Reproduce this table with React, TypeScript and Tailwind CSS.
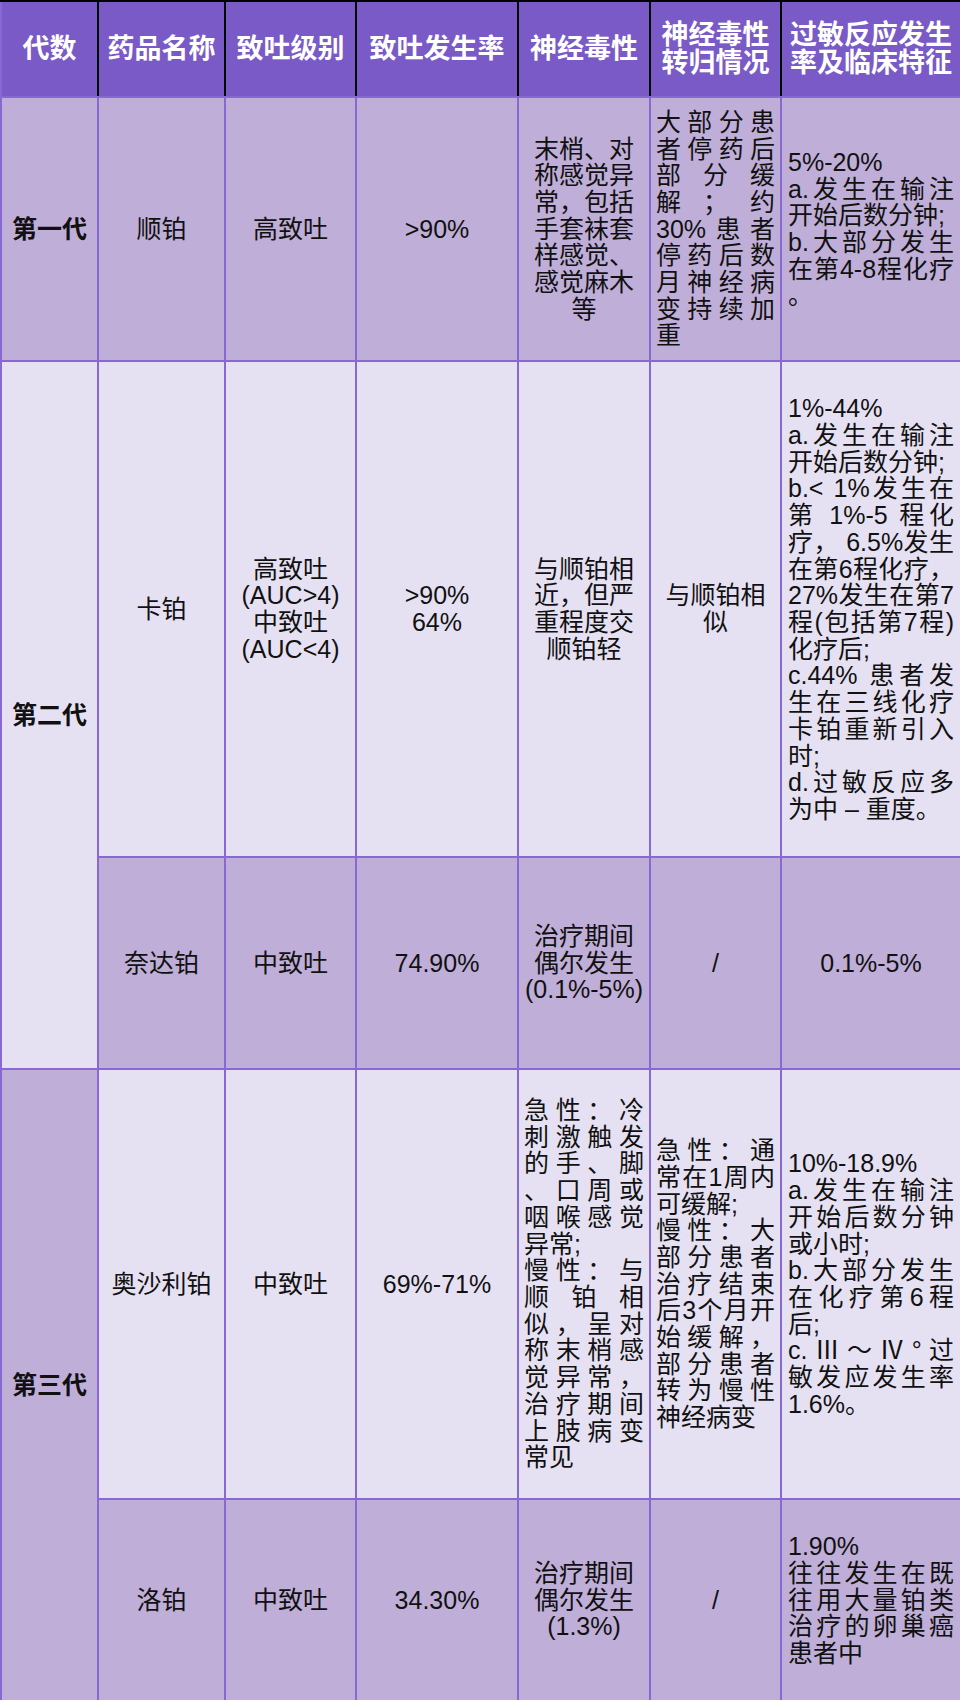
import React from "react";

// 铂类药物对比表
const th =
  "border-2 border-[#8869d4] border-t-black border-r-black bg-[#7a5ac6] text-white font-bold text-[27px] leading-[28px] text-center align-middle px-1";
const td = "border-2 border-[#8869d4] align-middle text-center px-[5px]";
const lilac = "bg-[#bfaed7]";
const light = "bg-[#e6e1f2]";

// 居中的多行文字
function Center({ lines, bold }: { lines: string[]; bold?: boolean }) {
  return (
    <div className={bold ? "font-bold" : ""}>
      {lines.map((l, i) => (
        <div key={i}>{l}</div>
      ))}
    </div>
  );
}

// 两端对齐：每段最后一行左对齐
function Justify({ paras }: { paras: string[][] }) {
  return (
    <div className="text-left">
      {paras.map((p, i) =>
        p.map((line, j) => (
          <div
            key={`${i}-${j}`}
            className={
              j < p.length - 1
                ? "text-justify [text-align-last:justify]"
                : "text-left"
            }
          >
            {line}
          </div>
        ))
      )}
    </div>
  );
}

export default function App() {
  return (
    <div className="w-[960px] bg-white">
      <table className="w-[960px] table-fixed border-collapse text-[25px] leading-[26.7px] text-[#111] font-['Liberation_Sans','Noto_Sans_CJK_SC',sans-serif]">
        <colgroup>
          <col className="w-[97px]" />
          <col className="w-[127px]" />
          <col className="w-[131px]" />
          <col className="w-[162px]" />
          <col className="w-[132px]" />
          <col className="w-[131px]" />
          <col className="w-[180px]" />
        </colgroup>
        <thead>
          <tr className="h-[96px]">
            <th className={th}>代数</th>
            <th className={th}>药品名称</th>
            <th className={th}>致吐级别</th>
            <th className={th}>致吐发生率</th>
            <th className={th}>神经毒性</th>
            <th className={th}>
              神经毒性
              <br />
              转归情况
            </th>
            <th className={th}>
              过敏反应发生
              <br />
              率及临床特征
            </th>
          </tr>
        </thead>
        <tbody>
          {/* 第一代 */}
          <tr className={`h-[264px] ${lilac}`}>
            <td className={td}>
              <Center lines={["第一代"]} bold />
            </td>
            <td className={td}>顺铂</td>
            <td className={td}>高致吐</td>
            <td className={td}>&gt;90%</td>
            <td className={td}>
              <Center
                lines={["末梢、对", "称感觉异", "常，包括", "手套袜套", "样感觉、", "感觉麻木", "等"]}
              />
            </td>
            <td className={td}>
              <Justify
                paras={[
                  ["大部分患", "者停药后", "部分缓", "解；约", "30%患者", "停药后数", "月神经病", "变持续加", "重"],
                ]}
              />
            </td>
            <td className={`${td} px-[6px]`}>
              <Justify
                paras={[
                  ["5%-20%"],
                  ["a.发生在输注", "开始后数分钟;"],
                  ["b.大部分发生", "在第4-8程化疗", "。"],
                ]}
              />
            </td>
          </tr>

          {/* 第二代 */}
          <tr className={`h-[496px] ${light}`}>
            <td className={td} rowSpan={2}>
              <Center lines={["第二代"]} bold />
            </td>
            <td className={td}>卡铂</td>
            <td className={td}>
              <Center lines={["高致吐", "(AUC>4)", "中致吐", "(AUC<4)"]} />
            </td>
            <td className={td}>
              <Center lines={[">90%", "64%"]} />
            </td>
            <td className={td}>
              <Center lines={["与顺铂相", "近，但严", "重程度交", "顺铂轻"]} />
            </td>
            <td className={td}>
              <Center lines={["与顺铂相", "似"]} />
            </td>
            <td className={`${td} px-[6px]`}>
              <Justify
                paras={[
                  ["1%-44%"],
                  ["a.发生在输注", "开始后数分钟;"],
                  ["b.< 1%发生在", "第 1%-5 程化", "疗， 6.5%发生", "在第6程化疗，", "27%发生在第7", "程(包括第7程)", "化疗后;"],
                  ["c.44% 患者发", "生在三线化疗", "卡铂重新引入", "时;"],
                  ["d.过敏反应多", "为中 – 重度。"],
                ]}
              />
            </td>
          </tr>
          <tr className={`h-[212px] ${lilac}`}>
            <td className={td}>奈达铂</td>
            <td className={td}>中致吐</td>
            <td className={td}>74.90%</td>
            <td className={td}>
              <Center lines={["治疗期间", "偶尔发生", "(0.1%-5%)"]} />
            </td>
            <td className={td}>/</td>
            <td className={td}>0.1%-5%</td>
          </tr>

          {/* 第三代 */}
          <tr className={`h-[430px] ${light}`}>
            <td className={`${td} ${lilac}`} rowSpan={2}>
              <Center lines={["第三代"]} bold />
            </td>
            <td className={td}>奥沙利铂</td>
            <td className={td}>中致吐</td>
            <td className={td}>69%-71%</td>
            <td className={td}>
              <Justify
                paras={[
                  ["急性：冷", "刺激触发", "的手、脚", "、口周或", "咽喉感觉", "异常;"],
                  ["慢性：与", "顺铂相", "似，呈对", "称末梢感", "觉异常，", "治疗期间", "上肢病变", "常见"],
                ]}
              />
            </td>
            <td className={td}>
              <Justify
                paras={[
                  ["急性：通", "常在1周内", "可缓解;"],
                  ["慢性：大", "部分患者", "治疗结束", "后3个月开", "始缓解，", "部分患者", "转为慢性", "神经病变"],
                ]}
              />
            </td>
            <td className={`${td} px-[6px]`}>
              <Justify
                paras={[
                  ["10%-18.9%"],
                  ["a.发生在输注", "开始后数分钟", "或小时;"],
                  ["b.大部分发生", "在化疗第6程", "后;"],
                  ["c.Ⅲ～Ⅳ°过", "敏发应发生率", "1.6%。"],
                ]}
              />
            </td>
          </tr>
          <tr className={`h-[202px] ${lilac}`}>
            <td className={td}>洛铂</td>
            <td className={td}>中致吐</td>
            <td className={td}>34.30%</td>
            <td className={td}>
              <Center lines={["治疗期间", "偶尔发生", "(1.3%)"]} />
            </td>
            <td className={td}>/</td>
            <td className={`${td} px-[6px]`}>
              <Justify
                paras={[
                  ["1.90%"],
                  ["往往发生在既", "往用大量铂类", "治疗的卵巢癌", "患者中"],
                ]}
              />
            </td>
          </tr>
        </tbody>
      </table>
    </div>
  );
}
